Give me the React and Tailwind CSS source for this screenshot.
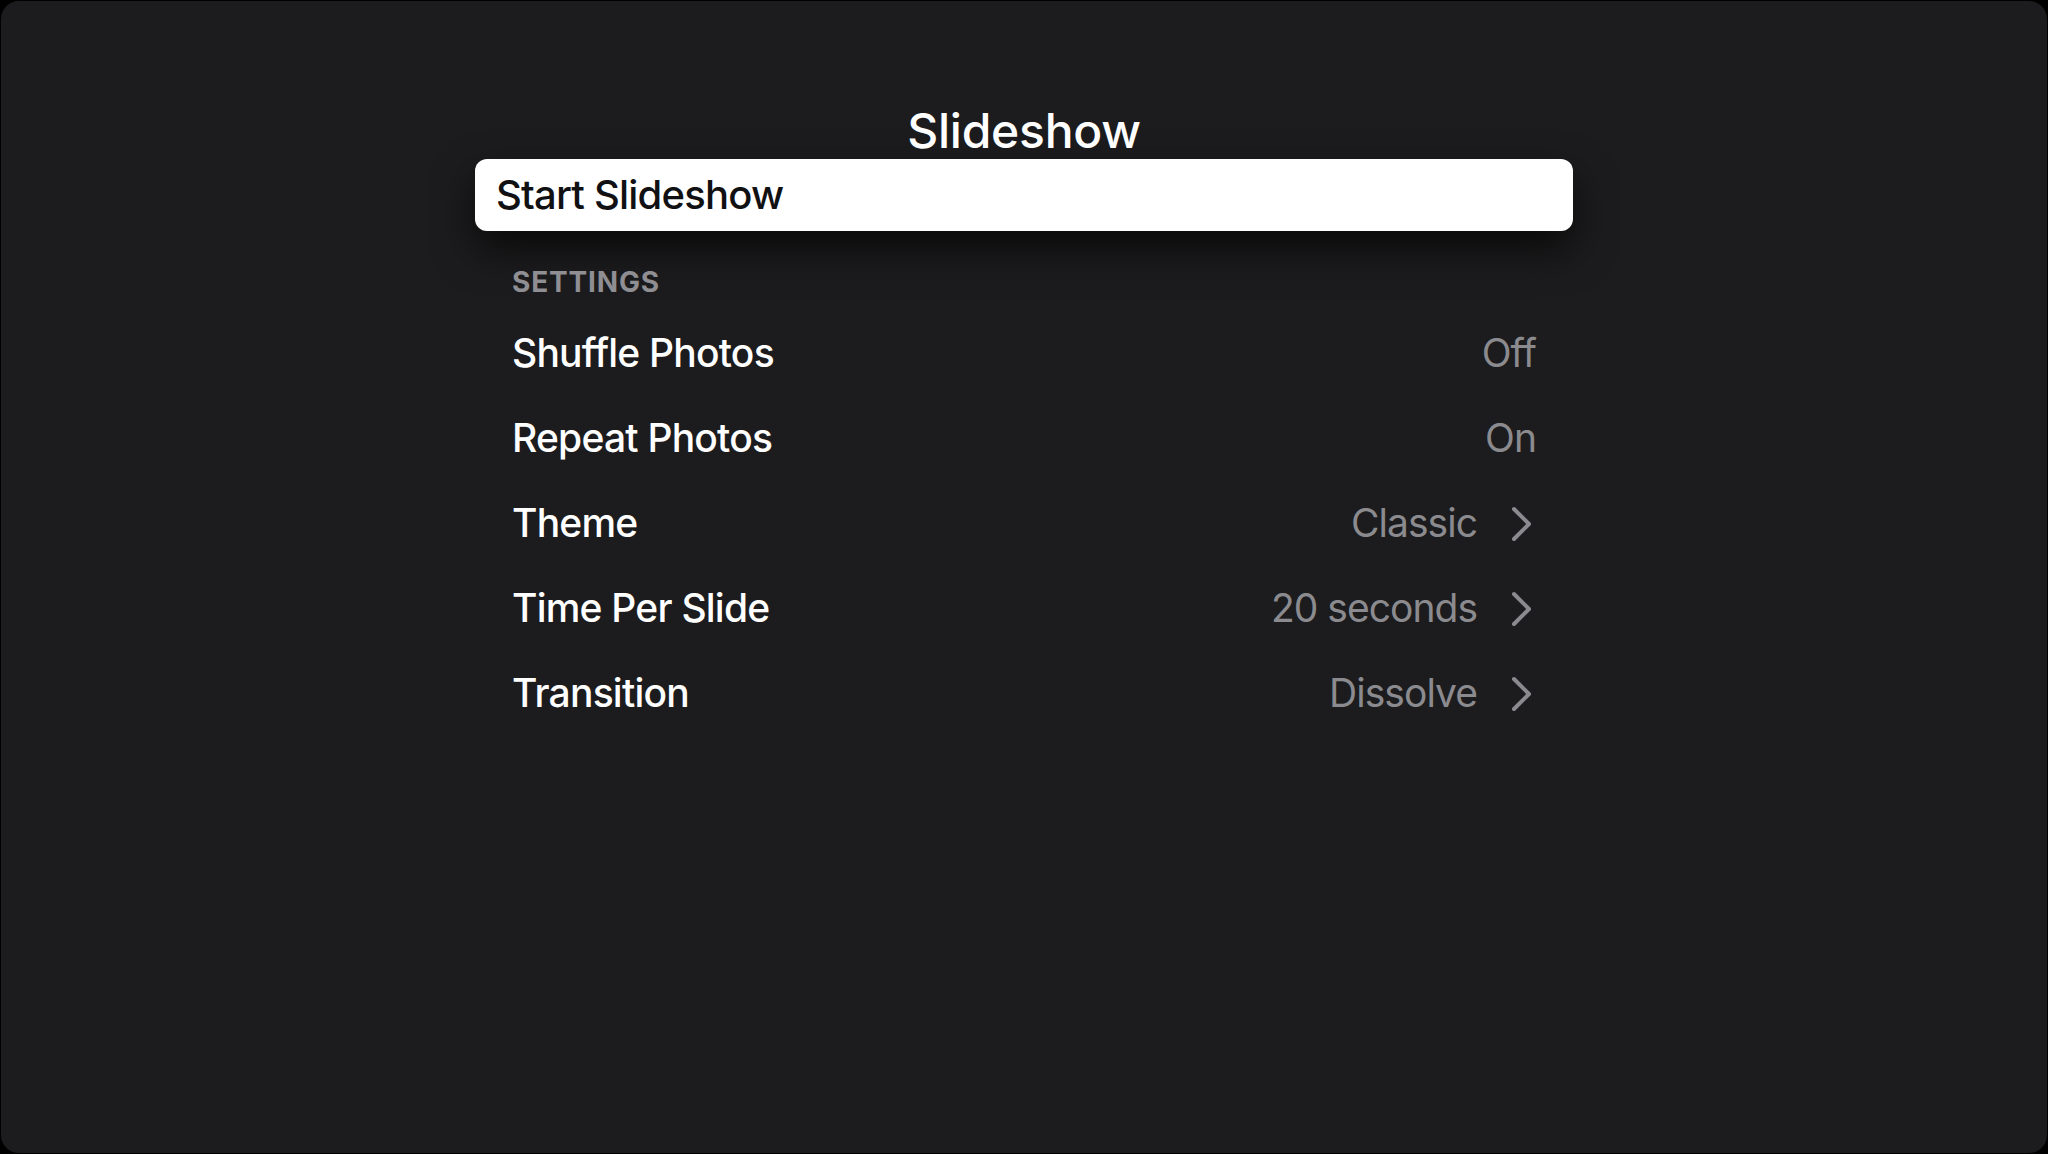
import React from 'react';

const rows = [
  { label: 'Shuffle Photos', value: 'Off' },
  { label: 'Repeat Photos', value: 'On' },
  { label: 'Theme', value: 'Classic', chevron: true },
  { label: 'Time Per Slide', value: '20 seconds', chevron: true },
  { label: 'Transition', value: 'Dissolve', chevron: true },
];

const Chevron = () => (
  <svg width="24" height="38" viewBox="0 0 24 38" fill="none" className="ml-[33px] mr-[2px]">
    <path d="M4 4 L19 19 L4 34" stroke="#8b8b8f" strokeWidth="4" strokeLinecap="round" strokeLinejoin="round" />
  </svg>
);

const App = () => {
  return (
    <div className="w-[2048px] h-[1154px] bg-black p-px font-['Inter','Liberation_Sans',sans-serif]">
      <div className="w-full h-full bg-[#1c1c1e] rounded-[18px] flex flex-col items-center">
        <div className="w-[1098px] pt-[102px]">
          {/* Title */}
          <h1 className="text-center text-[48px] leading-[56px] font-medium tracking-[-0.005em] text-white">Slideshow</h1>

          {/* Focused button */}
          <div className="h-[72px] rounded-[12px] bg-white flex items-center pl-[21px] shadow-[0_18px_40px_rgba(0,0,0,0.65)]">
            <span className="text-[40px] font-medium tracking-[-0.02em] text-[#111113]">Start Slideshow</span>
          </div>

          {/* Section header */}
          <div className="mt-[37px] pl-[37px] text-[28px] leading-[28px] font-bold tracking-[0.03em] text-[#8e8e93]">
            SETTINGS
          </div>

          {/* Settings rows */}
          <div className="mt-[15px] flex flex-col">
            {rows.map((row) => (
              <div key={row.label} className="h-[85px] flex items-center justify-between pl-[37px] pr-[37px]">
                <span className="text-[39px] font-medium tracking-[-0.02em] text-white">{row.label}</span>
                <div className="flex items-center">
                  <span className="text-[39px] tracking-[-0.025em] text-[#8b8b8f]">{row.value}</span>
                  {row.chevron && <Chevron />}
                </div>
              </div>
            ))}
          </div>
        </div>
      </div>
    </div>
  );
};

export default App;
